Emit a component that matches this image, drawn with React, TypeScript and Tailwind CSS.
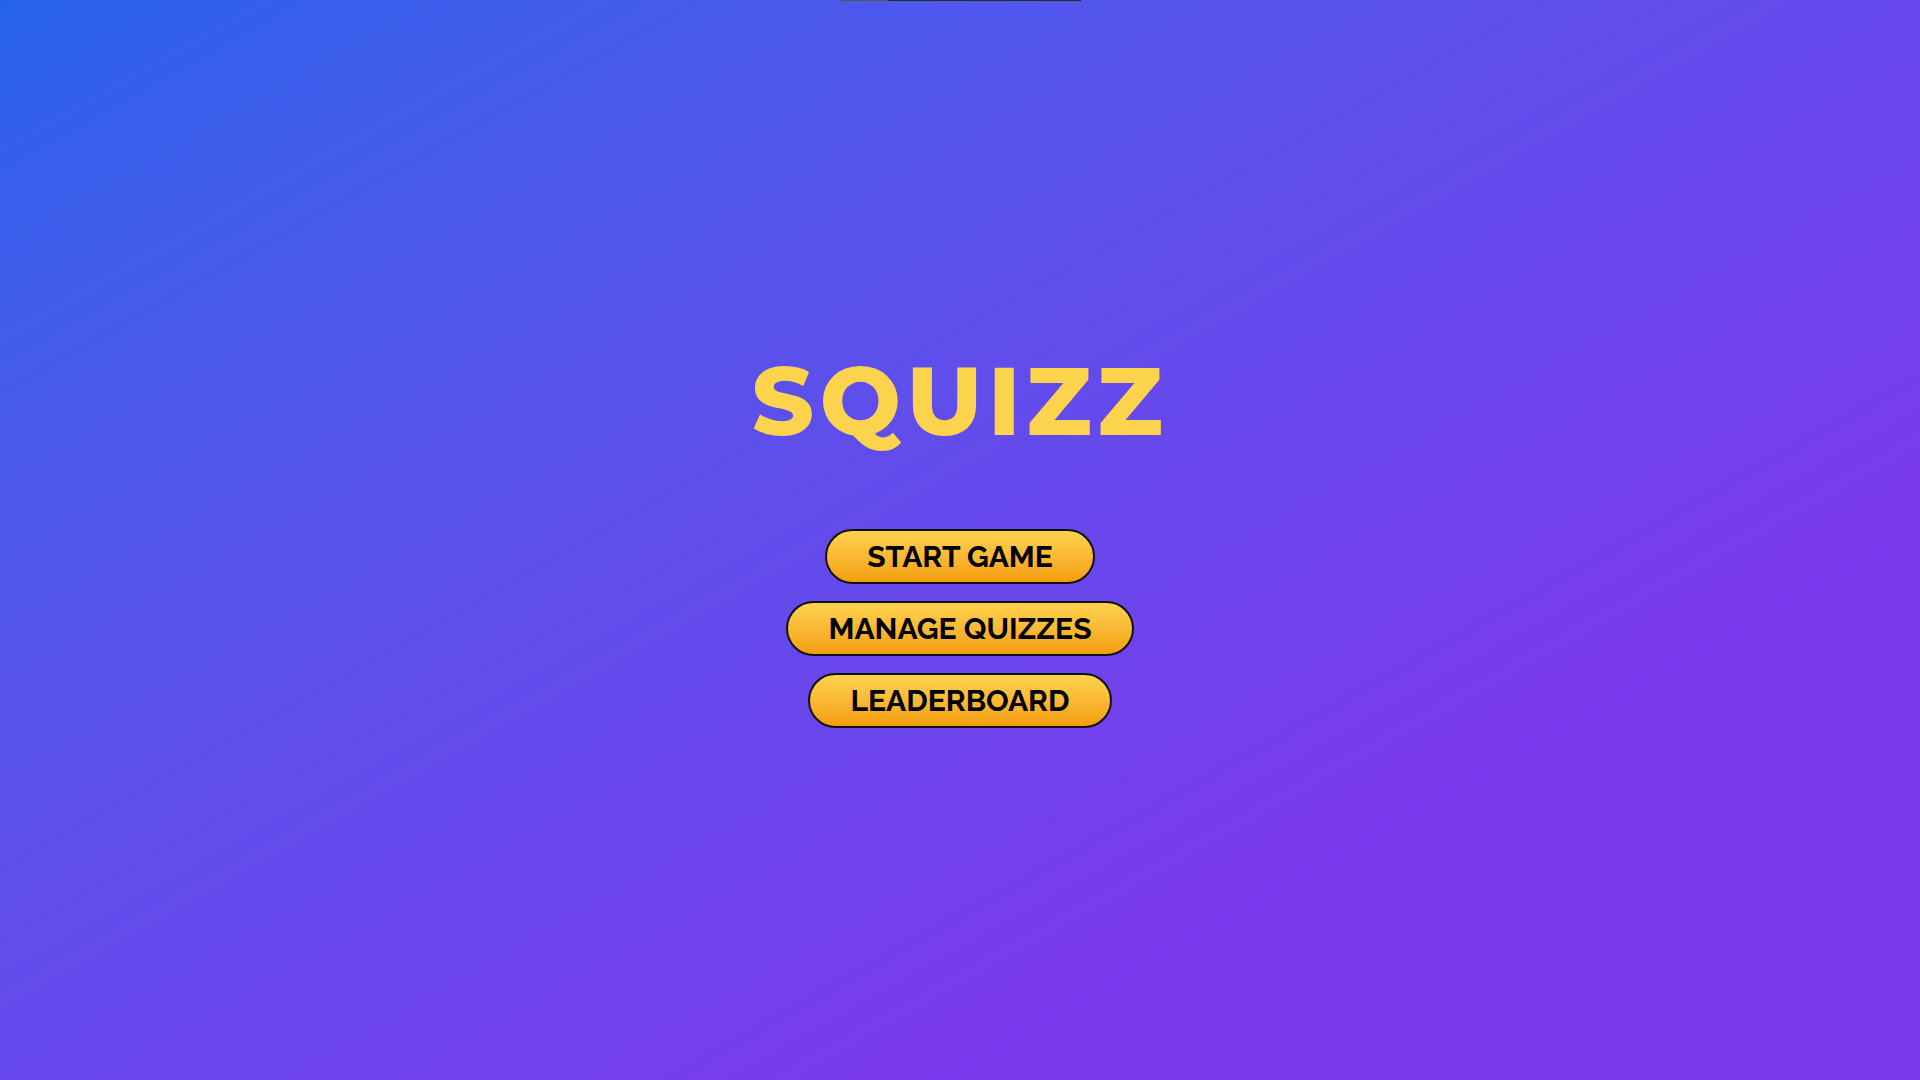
export default function App() {
  const buttons = ["START GAME", "MANAGE QUIZZES", "LEADERBOARD"];

  return (
    <div className="relative flex h-screen w-full flex-col items-center justify-center overflow-hidden bg-gradient-to-br from-[#2563eb] via-[#6a45ec] via-55% to-[#7c3aed] to-75%">
      {/* top progress strip */}
      <div className="absolute left-[840px] top-0 flex h-px w-[241px] bg-[#2a2a2a]">
        <div className="h-px w-[48px] bg-[#555]" />
      </div>

      <h1 className="mb-[80px] font-['Montserrat','Inter',sans-serif] text-[96px] font-extrabold leading-none tracking-[0.06em] text-[#fcd34d]">
        SQUIZZ
      </h1>

      <div className="flex flex-col items-center gap-[17px]">
        {buttons.map((label) => (
          <button
            key={label}
            className="rounded-full border-2 border-[#111] bg-gradient-to-b from-[#fcd34d] to-[#f59e0b] px-[40px] py-2 font-['Raleway','Lato',sans-serif] text-[30px] font-bold leading-[35px] text-black"
          >
            {label}
          </button>
        ))}
      </div>
    </div>
  );
}
